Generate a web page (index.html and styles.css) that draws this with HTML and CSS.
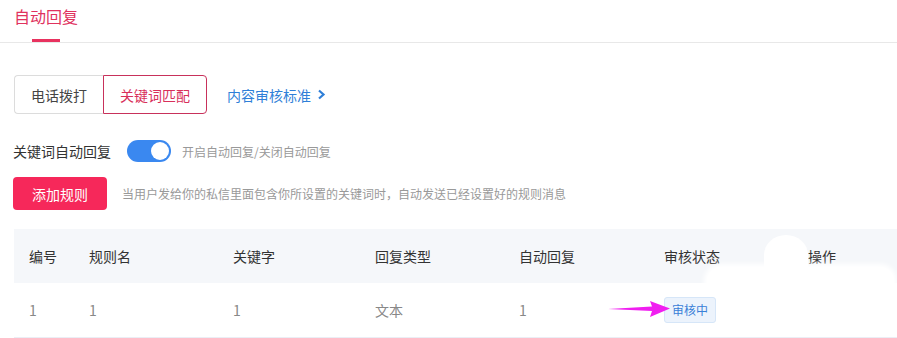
FILE: index.html
```html
<!DOCTYPE html>
<html lang="zh-CN">
<head>
  <meta charset="UTF-8" />
  <title>自动回复</title>
  <link rel="stylesheet" href="styles.css">
</head>
<body>
  <div class="tabs">
    <div class="tab active">自动回复</div>
  </div>

  <div class="content">
    <div class="mode-row">
      <div class="segmented">
        <span class="seg">电话拨打</span>
        <span class="seg selected">关键词匹配</span>
      </div>
      <a class="link" href="#">内容审核标准
        <svg width="9" height="11" viewBox="0 0 9 11"><path d="M2 1.5 L6.5 5.5 L2 9.5" fill="none" stroke="#2f7fd8" stroke-width="2.2"/></svg>
      </a>
    </div>

    <div class="switch-row">
      <span class="label">关键词自动回复</span>
      <span class="switch"><span class="knob"></span></span>
      <span class="hint">开启自动回复/关闭自动回复</span>
    </div>

    <div class="add-row">
      <button class="btn-add">添加规则</button>
      <span class="hint">当用户发给你的私信里面包含你所设置的关键词时，自动发送已经设置好的规则消息</span>
    </div>

    <div class="table">
      <div class="tr thead">
        <div class="c1">编号</div>
        <div class="c2">规则名</div>
        <div class="c3">关键字</div>
        <div class="c4">回复类型</div>
        <div class="c5">自动回复</div>
        <div class="c6">审核状态</div>
        <div class="c7">操作</div>
      </div>
      <div class="tr tbody">
        <div class="c1">1</div>
        <div class="c2">1</div>
        <div class="c3">1</div>
        <div class="c4">文本</div>
        <div class="c5">1</div>
        <div class="c6"><span class="tag">审核中</span></div>
        <div class="c7 del"><a href="#">删除</a></div>
      </div>
      <div class="blot"></div>
      <svg class="arrow" width="64" height="20" viewBox="0 0 64 20">
        <path d="M0 10 L44 7.5 L42 2 L62 9.5 L42 18 L44 12 Z" fill="#f01ef0"/>
      </svg>
    </div>
  </div>
</body>
</html>
```

FILE: styles.css
```css
body {
  margin: 0;
  font-family: "Noto Sans CJK SC", "Noto Sans", sans-serif;
  background: #fff;
  color: #333;
  font-size: 14px;
}
.tabs {
  height: 42px;
  border-bottom: 1px solid #e8e8e8;
  padding-left: 14px;
}
.tab {
  display: inline-block;
  position: relative;
  font-size: 16px;
  line-height: 32px;
  color: #e0325e;
  height: 42px;
}
.tab.active::after {
  content: "";
  position: absolute;
  left: 18px;
  bottom: 0;
  width: 28px;
  height: 3px;
  background: #e8325f;
}
.content {
  padding: 32px 0 0 14px;
}
.mode-row {
  display: flex;
  align-items: center;
}
.segmented {
  display: flex;
}
.seg {
  height: 39px;
  line-height: 39px;
  padding: 0 16px;
  border: 1px solid #dcdcdc;
  color: #444;
  box-sizing: border-box;
}
.seg:first-child {
  border-radius: 4px 0 0 4px;
  border-right: none;
  width: 89px;
}
.seg.selected {
  border-color: #c8315b;
  color: #d8305a;
  border-radius: 0 4px 4px 0;
  width: 104px;
}
.link {
  margin-left: 20px;
  color: #2f7fd8;
  text-decoration: none;
  display: flex;
  align-items: center;
  gap: 6px;
}
.switch-row {
  display: flex;
  align-items: center;
  margin-top: 25px;
  height: 24px;
}
.label {
  width: 114px;
  color: #333;
  margin-left: -1px;
}
.switch {
  width: 44px;
  height: 22px;
  border-radius: 11px;
  background: #3a88f0;
  position: relative;
}
.knob {
  position: absolute;
  right: 2px;
  top: 2px;
  width: 18px;
  height: 18px;
  border-radius: 50%;
  background: #fff;
}
.hint {
  color: #999;
  font-size: 12px;
  margin-left: 11px;
}
.add-row {
  display: flex;
  align-items: center;
  margin-top: 14px;
  margin-left: -1px;
}
.btn-add {
  width: 94px;
  height: 33px;
  border: none;
  border-radius: 4px;
  background: #f6285a;
  color: #fff;
  font-family: inherit;
  font-size: 14px;
}
.add-row .hint {
  margin-left: 15px;
}
.table {
  position: relative;
  margin-top: 19px;
}
.tr {
  display: flex;
  align-items: center;
  height: 54px;
}
.thead {
  background: #f5f7fa;
  color: #333;
}
.tbody {
  color: #888;
  border-bottom: 1px solid #ebeef5;
}
.tr > div { box-sizing: border-box; }
.c1 { width: 75px; padding-left: 15px; }
.c2 { width: 144px; }
.c3 { width: 142px; }
.c4 { width: 144px; }
.c5 { width: 145px; }
.c6 { width: 144px; }
.c7 { flex: 1; }
.del {
  text-align: right;
  padding-right: 25px;
}
.del a {
  color: #3c78d8;
  text-decoration: none;
}
.tag {
  position: relative;
  z-index: 2;
  display: inline-block;
  height: 26px;
  line-height: 24px;
  padding: 0 7px;
  box-sizing: border-box;
  font-size: 12px;
  color: #3a80d8;
  background: #ecf3fc;
  border: 1px solid #d6e6f8;
  border-radius: 3px;
}
.blot {
  position: absolute;
  left: 693px;
  top: 38px;
  width: 187px;
  height: 60px;
  background: #fff;
  border-radius: 14px;
  box-shadow: 0 0 5px 3px #fff;
}
.blot::before {
  content: "";
  position: absolute;
  left: 57px;
  top: -32px;
  width: 44px;
  height: 40px;
  background: #fff;
  border-radius: 50% 50% 0 0;
}
.arrow {
  position: absolute;
  z-index: 3;
  left: 594px;
  top: 70px;
}
```
